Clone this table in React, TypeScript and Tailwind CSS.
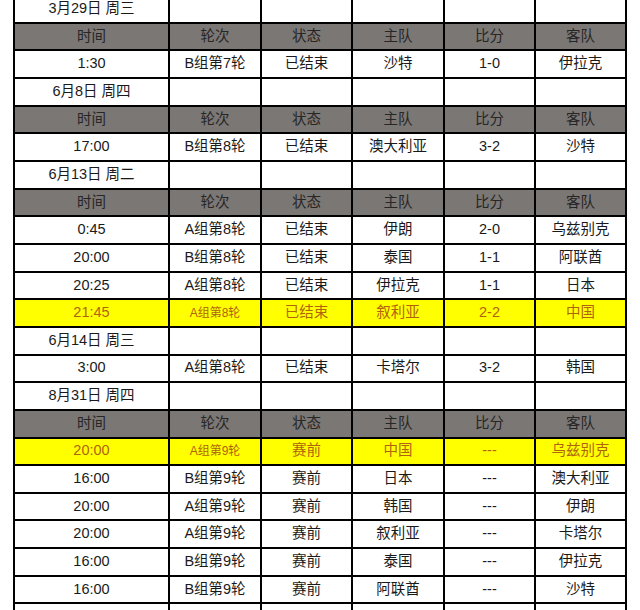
type Row =
  | { kind: "date"; label: string }
  | { kind: "head" }
  | { kind: "match"; cells: string[]; hot?: boolean }
  | { kind: "blank" };

const HEAD = ["时间", "轮次", "状态", "主队", "比分", "客队"];

const ROWS: Row[] = [
  { kind: "date", label: "3月29日 周三" },
  { kind: "head" },
  { kind: "match", cells: ["1:30", "B组第7轮", "已结束", "沙特", "1-0", "伊拉克"] },
  { kind: "date", label: "6月8日 周四" },
  { kind: "head" },
  { kind: "match", cells: ["17:00", "B组第8轮", "已结束", "澳大利亚", "3-2", "沙特"] },
  { kind: "date", label: "6月13日 周二" },
  { kind: "head" },
  { kind: "match", cells: ["0:45", "A组第8轮", "已结束", "伊朗", "2-0", "乌兹别克"] },
  { kind: "match", cells: ["20:00", "B组第8轮", "已结束", "泰国", "1-1", "阿联酋"] },
  { kind: "match", cells: ["20:25", "A组第8轮", "已结束", "伊拉克", "1-1", "日本"] },
  { kind: "match", cells: ["21:45", "A组第8轮", "已结束", "叙利亚", "2-2", "中国"], hot: true },
  { kind: "date", label: "6月14日 周三" },
  { kind: "match", cells: ["3:00", "A组第8轮", "已结束", "卡塔尔", "3-2", "韩国"] },
  { kind: "date", label: "8月31日 周四" },
  { kind: "head" },
  { kind: "match", cells: ["20:00", "A组第9轮", "赛前", "中国", "---", "乌兹别克"], hot: true },
  { kind: "match", cells: ["16:00", "B组第9轮", "赛前", "日本", "---", "澳大利亚"] },
  { kind: "match", cells: ["20:00", "A组第9轮", "赛前", "韩国", "---", "伊朗"] },
  { kind: "match", cells: ["20:00", "A组第9轮", "赛前", "叙利亚", "---", "卡塔尔"] },
  { kind: "match", cells: ["16:00", "B组第9轮", "赛前", "泰国", "---", "伊拉克"] },
  { kind: "match", cells: ["16:00", "B组第9轮", "赛前", "阿联酋", "---", "沙特"] },
  { kind: "blank" },
];

// widths include the 2px right border of each cell
const COLS = ["w-[155px]", "w-[92px]", "w-[91px]", "w-[92px]", "w-[91px]", "flex-1"];

function Cell({ i, children, small }: { i: number; children?: React.ReactNode; small?: boolean }) {
  return (
    <div
      className={`${COLS[i]} h-full flex items-center justify-center ${
        i < 5 ? "border-r-2 border-black" : ""
      } ${small ? "text-[12px]" : ""}`}
    >
      {children}
    </div>
  );
}

export default function App() {
  return (
    <div
      className="w-[640px] h-[610px] overflow-hidden bg-white text-[14.5px] text-[#1a1a1a]"
      style={{ fontFamily: '"Liberation Sans", "Noto Sans CJK SC", sans-serif' }}
    >
      <div className="ml-[13px] w-[614px] -mt-[4px] border-l-2 border-r-2 border-black">
        {ROWS.map((row, r) => {
          if (row.kind === "head") {
            return (
              <div key={r} className="flex h-[27.67px] border-b-2 border-black bg-[#7b7774] text-[#262626]">
                {HEAD.map((h, i) => (
                  <Cell key={i} i={i}>
                    {h}
                  </Cell>
                ))}
              </div>
            );
          }
          if (row.kind === "date" || row.kind === "blank") {
            return (
              <div key={r} className="flex h-[27.67px] border-b-2 border-black bg-white">
                {[0, 1, 2, 3, 4, 5].map((i) => (
                  <Cell key={i} i={i}>
                    {i === 0 && row.kind === "date" ? row.label : null}
                  </Cell>
                ))}
              </div>
            );
          }
          return (
            <div
              key={r}
              className={`flex h-[27.67px] border-b-2 border-black ${
                row.hot ? "bg-[#ffff00] text-[#b0640c]" : "bg-white"
              }`}
            >
              {row.cells.map((c, i) => (
                <Cell key={i} i={i} small={row.hot && i === 1}>
                  {c}
                </Cell>
              ))}
            </div>
          );
        })}
      </div>
    </div>
  );
}
